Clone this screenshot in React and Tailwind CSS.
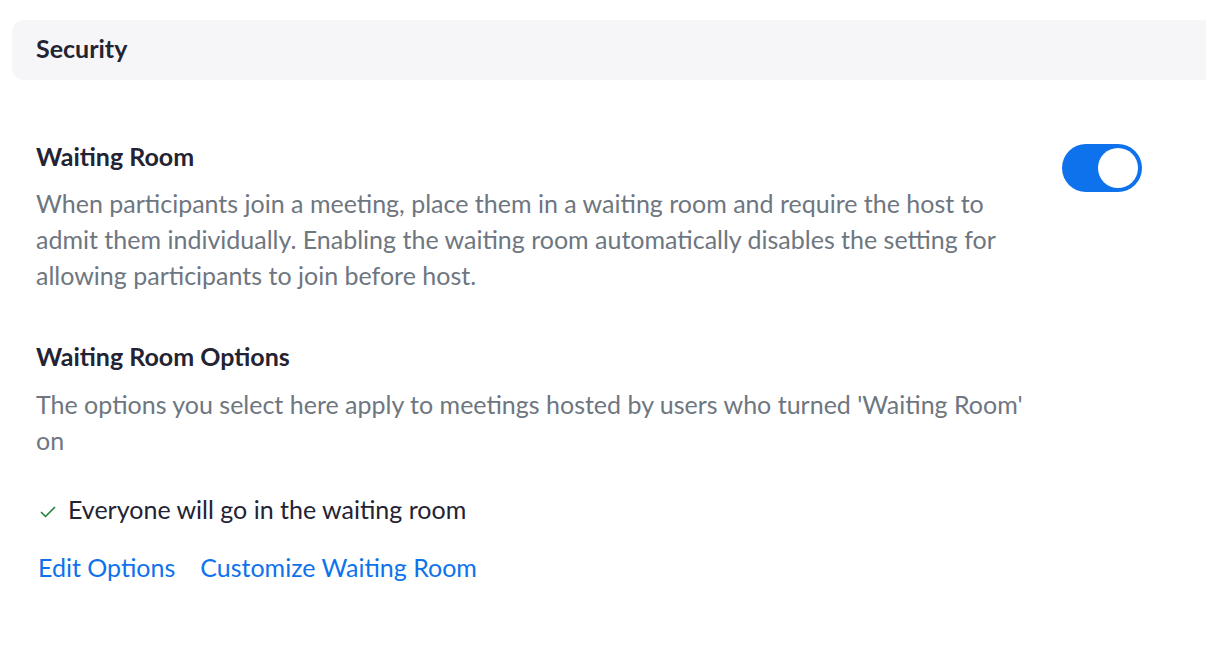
export default function App() {
  return (
    <div className="min-h-screen bg-white pt-5 pl-3 font-['Lato','Open_Sans',sans-serif] text-[#232333]">
      {/* Section header */}
      <div className="h-[60px] flex items-center rounded-l-xl bg-[#f6f6f8] pb-1 pl-6">
        <h2 className="text-[25px] font-bold leading-7">Security</h2>
      </div>

      <div className="pl-6 pt-[62px]">
        {/* Waiting room setting */}
        <div className="flex items-start">
          <div className="w-[1012px]">
            <h3 className="text-[25px] font-bold leading-7">Waiting Room</h3>
            <p className="mt-[15px] text-[25px] leading-9 text-[#6e7680]">
              When participants join a meeting, place them in a waiting room and require the host to
              admit them individually. Enabling the waiting room automatically disables the setting for
              allowing participants to join before host.
            </p>
          </div>
          <button className="ml-[14px] mt-[2px] flex h-12 w-20 items-center justify-end rounded-full bg-[#0e72ed] px-1">
            <span className="h-10 w-10 rounded-full bg-white" />
          </button>
        </div>

        {/* Options */}
        <div className="mt-[49px] w-[1012px]">
          <h3 className="text-[25px] font-bold leading-7">Waiting Room Options</h3>
          <p className="mt-4 text-[25px] leading-9 text-[#6e7680]">
            The options you select here apply to meetings hosted by users who turned 'Waiting Room' on
          </p>
          <div className="mt-[33px] flex h-9 items-center">
            <svg width="16" height="14" viewBox="0 0 16 14" className="ml-1 mr-3 mt-[5px]" fill="none">
              <path d="M1.5 7.5 L5.5 11.5 L14.5 2.5" stroke="#268543" strokeWidth="1.7" strokeLinecap="round" strokeLinejoin="round" />
            </svg>
            <span className="text-[25px] leading-9">Everyone will go in the waiting room</span>
          </div>
          <div className="mt-[23px] flex h-9 items-center gap-[25px] pl-[2px] text-[25px] text-[#0e72ed]">
            <a href="#">Edit Options</a>
            <a href="#">Customize Waiting Room</a>
          </div>
        </div>
      </div>
    </div>
  );
}
